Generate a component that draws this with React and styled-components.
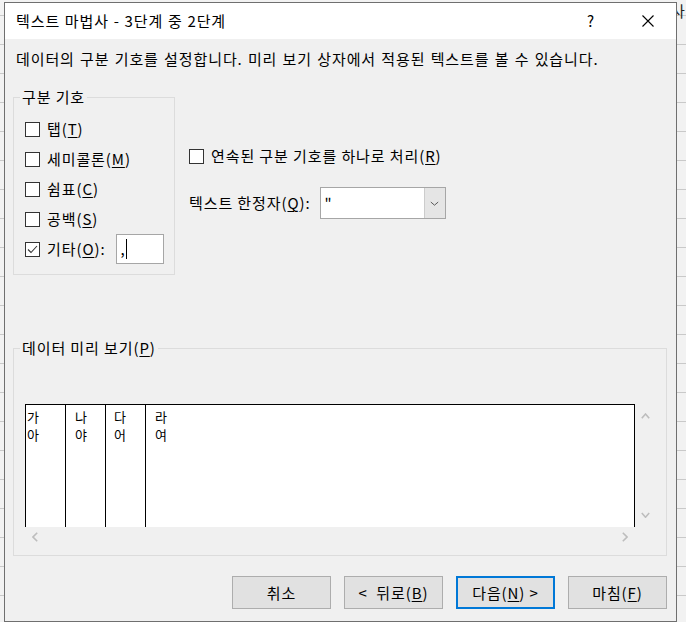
import React from 'react';
import styled, { createGlobalStyle } from 'styled-components';

const Global = createGlobalStyle`
  html, body { margin: 0; padding: 0; }
  body {
    width: 686px;
    height: 622px;
    overflow: hidden;
    font-family: "Noto Sans CJK KR", "Noto Sans", sans-serif;
    letter-spacing: 0.9px;
    color: #000;
  }
  * { box-sizing: border-box; }
`;

const Desktop = styled.div`
  position: relative;
  width: 686px;
  height: 622px;
  overflow: hidden;
  background-color: #f2f2f2;
  background-image: repeating-linear-gradient(
    to bottom,
    transparent 0 15px,
    #c9c9c9 15px 16px,
    transparent 16px 29px
  );
`;

const SheetText = styled.span`
  position: absolute;
  left: 671px;
  top: 1px;
  font-size: 15px;
  line-height: 20px;
  color: #222;
`;

const Dialog = styled.div`
  position: absolute;
  left: 4px;
  top: 2px;
  width: 673px;
  height: 620px;
  border: 1px solid #6f6f6f;
  background: #f0f0f0;
  display: flex;
  flex-direction: column;
`;

const TitleBar = styled.div`
  height: 36px;
  background: #fff;
  display: flex;
  align-items: center;
  padding-left: 11px;
  flex-shrink: 0;
`;

const Title = styled.div`
  flex: 1;
  font-size: 15px;
  line-height: 20px;
  word-spacing: 0.5px;
`;

const CaptionButton = styled.div`
  width: 57px;
  height: 36px;
  display: flex;
  align-items: center;
  justify-content: center;
  font-size: 15px;
  line-height: 20px;
  letter-spacing: 0;
`;

const Body = styled.div`
  flex: 1;
  display: flex;
  flex-direction: column;
  padding: 10px 9px 12px 8px;
`;

const Description = styled.div`
  margin-left: 3px;
  font-size: 15px;
  line-height: 20px;
  word-spacing: 1px;
  white-space: nowrap;
`;

const TopSection = styled.div`
  display: flex;
  align-items: flex-start;
  gap: 14px;
  margin-top: 19px;
`;

const GroupBox = styled.fieldset`
  margin: 0;
  min-width: 0;
  width: ${(p) => p.$width};
  border: 1px solid #dcdcdc;
  padding: ${(p) => p.$padding};
`;

const Legend = styled.legend`
  padding: 0 2px;
  margin-left: ${(p) => p.$offset}px;
  font-size: 15px;
  line-height: 18px;
`;

const CheckRow = styled.label`
  display: flex;
  align-items: center;
  height: 30px;
  gap: 7px;
  font-size: 15px;
  line-height: 20px;
  white-space: nowrap;
`;

const Box = styled.span`
  width: 15px;
  height: 15px;
  border: 1px solid #333;
  background: #fff;
  display: flex;
  align-items: center;
  justify-content: center;
  flex-shrink: 0;
`;

const U = styled.span`
  text-decoration: underline;
  text-underline-offset: 2px;
  text-decoration-thickness: 1px;
`;

const OtherInput = styled.div`
  width: 48px;
  height: 30px;
  margin-left: 4px;
  border: 1px solid #a6a6a6;
  background: #fff;
  display: flex;
  align-items: center;
  padding-left: 3px;
  font-size: 15px;
  line-height: 20px;
  letter-spacing: 0;
`;

const Caret = styled.span`
  display: inline-block;
  width: 1px;
  height: 20px;
  background: #000;
  margin-left: 1px;
`;

const RightColumn = styled.div`
  display: flex;
  flex-direction: column;
  padding-top: 53px;
`;

const QualifierRow = styled.div`
  display: flex;
  align-items: center;
  gap: 9px;
  margin-top: 16px;
  font-size: 15px;
  line-height: 20px;
  white-space: nowrap;
`;

const Combo = styled.div`
  width: 126px;
  height: 32px;
  border: 1px solid #a6a6a6;
  background: #fff;
  display: flex;
`;

const ComboText = styled.div`
  flex: 1;
  padding-left: 4px;
  display: flex;
  align-items: center;
  font-size: 15px;
`;

const ComboButton = styled.div`
  width: 21px;
  background: #e5e5e5;
  border-left: 1px solid #cccccc;
  display: flex;
  align-items: center;
  justify-content: center;
`;

const PreviewGroup = styled(GroupBox)`
  margin-top: 64px;
`;

const Scroller = styled.div`
  display: grid;
  grid-template-columns: 610px 20px;
  grid-template-rows: 123px 20px;
`;

const DataArea = styled.div`
  background: #fff;
  border: 1px solid #000;
  border-bottom: none;
  display: flex;
  overflow: hidden;
`;

const DataColumn = styled.div`
  width: ${(p) => (p.$last ? 'auto' : '40px')};
  flex: ${(p) => (p.$last ? '1' : 'none')};
  border-right: ${(p) => (p.$last ? 'none' : '1px solid #000')};
  padding: 3px 0 0 ${(p) => p.$pad}px;
  font-size: 13px;
  line-height: 18px;
  letter-spacing: 0;
  display: flex;
  flex-direction: column;
`;

const VScroll = styled.div`
  background: #f0f0f0;
  display: flex;
  flex-direction: column;
  justify-content: space-between;
`;

const HScroll = styled.div`
  background: #f0f0f0;
  display: flex;
  justify-content: space-between;
  align-items: center;
`;

const ArrowBox = styled.div`
  width: 20px;
  height: ${(p) => p.$h || 20}px;
  display: flex;
  align-items: center;
  justify-content: center;
`;

const Corner = styled.div`
  background: #f0f0f0;
`;

const ButtonRow = styled.div`
  display: flex;
  justify-content: flex-end;
  gap: 13px;
  margin-top: 20px;
`;

const Button = styled.button`
  width: 99px;
  height: 33px;
  padding: 0;
  margin: 0;
  background: #e1e1e1;
  border: ${(p) => (p.$default ? '2px solid #0078d7' : '1px solid #adadad')};
  font-family: inherit;
  font-size: 15px;
  line-height: 20px;
  letter-spacing: inherit;
  color: #000;
  white-space: pre;
`;

const Check = ({ checked }) => (
  <Box>
    {checked && (
      <svg width="13" height="13" viewBox="0 0 13 13">
        <polyline points="2,6.5 5,9.5 11,3" fill="none" stroke="#333" strokeWidth="1.1" />
      </svg>
    )}
  </Box>
);

const Chevron = ({ dir, color = '#bdbdbd', w = 9, h = 6, sw = 1.6 }) => {
  const pts = {
    up: `0.8,${h - 0.8} ${w / 2},1 ${w - 0.8},${h - 0.8}`,
    down: `0.8,1 ${w / 2},${h - 0.8} ${w - 0.8},1`,
    left: `${w - 0.8},0.8 1,${h / 2} ${w - 0.8},${h - 0.8}`,
    right: `0.8,0.8 ${w - 1},${h / 2} 0.8,${h - 0.8}`,
  }[dir];
  return (
    <svg width={w} height={h} viewBox={`0 0 ${w} ${h}`}>
      <polyline points={pts} fill="none" stroke={color} strokeWidth={sw} />
    </svg>
  );
};

const delimiters = [
  { label: '탭', key: 'T' },
  { label: '세미콜론', key: 'M' },
  { label: '쉼표', key: 'C' },
  { label: '공백', key: 'S' },
];

const columns = [
  { rows: ['가', '아'], pad: 1 },
  { rows: ['나', '야'], pad: 9 },
  { rows: ['다', '어'], pad: 8 },
  { rows: ['라', '여'], pad: 9, last: true },
];

export default function App() {
  return (
    <Desktop>
      <Global />
      <SheetText>사</SheetText>
      <Dialog>
        <TitleBar>
          <Title>텍스트 마법사 - 3단계 중 2단계</Title>
          <CaptionButton>?</CaptionButton>
          <CaptionButton>
            <svg width="12" height="12" viewBox="0 0 12 12">
              <path d="M0.5 0.5 L11.5 11.5 M11.5 0.5 L0.5 11.5" stroke="#000" strokeWidth="1.1" fill="none" />
            </svg>
          </CaptionButton>
        </TitleBar>
        <Body>
          <Description>
            데이터의 구분 기호를 설정합니다. 미리 보기 상자에서 적용된 텍스트를 볼 수 있습니다.
          </Description>
          <TopSection>
            <GroupBox $width="162px" $padding="8px 0 10px 11px">
              <Legend $offset={-5}>구분 기호</Legend>
              {delimiters.map((d) => (
                <CheckRow key={d.key}>
                  <Check />
                  <span>
                    {d.label}(<U>{d.key}</U>)
                  </span>
                </CheckRow>
              ))}
              <CheckRow>
                <Check checked />
                <span>
                  기타(<U>O</U>):
                </span>
                <OtherInput>
                  ,<Caret />
                </OtherInput>
              </CheckRow>
            </GroupBox>
            <RightColumn>
              <CheckRow>
                <Check />
                <span>
                  연속된 구분 기호를 하나로 처리(<U>R</U>)
                </span>
              </CheckRow>
              <QualifierRow>
                <span>
                  텍스트 한정자(<U>Q</U>):
                </span>
                <Combo>
                  <ComboText>"</ComboText>
                  <ComboButton>
                    <Chevron dir="down" color="#5a5a5a" w={9} h={5} sw={1} />
                  </ComboButton>
                </Combo>
              </QualifierRow>
            </RightColumn>
          </TopSection>
          <PreviewGroup $width="100%" $padding="47px 10px 8px 11px">
            <Legend $offset={-5}>
              데이터 미리 보기(<U>P</U>)
            </Legend>
            <Scroller>
              <DataArea>
                {columns.map((c, i) => (
                  <DataColumn key={i} $pad={c.pad} $last={c.last}>
                    {c.rows.map((r) => (
                      <span key={r}>{r}</span>
                    ))}
                  </DataColumn>
                ))}
              </DataArea>
              <VScroll>
                <ArrowBox $h={24}>
                  <Chevron dir="up" />
                </ArrowBox>
                <ArrowBox $h={24}>
                  <Chevron dir="down" />
                </ArrowBox>
              </VScroll>
              <HScroll>
                <ArrowBox>
                  <Chevron dir="left" w={6} h={10} />
                </ArrowBox>
                <ArrowBox>
                  <Chevron dir="right" w={6} h={10} />
                </ArrowBox>
              </HScroll>
              <Corner />
            </Scroller>
          </PreviewGroup>
          <ButtonRow>
            <Button>취소</Button>
            <Button>
              {'<  뒤로('}
              <U>B</U>)
            </Button>
            <Button $default>
              다음(<U>N</U>
              {') >'}
            </Button>
            <Button>
              마침(<U>F</U>)
            </Button>
          </ButtonRow>
        </Body>
      </Dialog>
    </Desktop>
  );
}
